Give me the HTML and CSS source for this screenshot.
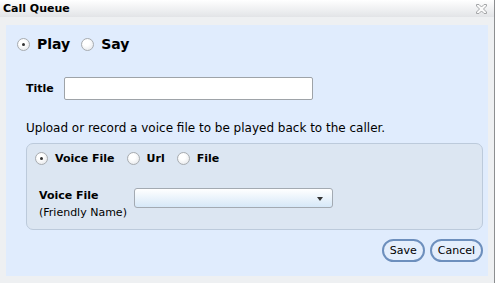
FILE: index.html
```html
<!DOCTYPE html>
<html lang="en">
<head>
    <meta charset="UTF-8">
    <title>Call Queue</title>
    <link rel="stylesheet" href="styles.css">
</head>
<body>
    <div class="dialog">
        <div class="titlebar">
            <span class="title">Call Queue</span>
            <svg class="close" width="13" height="12" viewBox="0 0 13 12">
                <path d="M1.5 1.5 L4 1.5 L6.5 4 L9 1.5 L11.5 1.5 L11.5 3 L8.5 6 L11.5 9 L11.5 10.5 L9 10.5 L6.5 8 L4 10.5 L1.5 10.5 L1.5 9 L4.5 6 L1.5 3 Z" fill="#fafafa" stroke="#a4a6a8" stroke-width="1"/>
            </svg>
        </div>
        <div class="content">
            <div class="panel">
                <div class="mode-row">
                    <label class="choice big"><span class="radio checked"></span>Play</label>
                    <label class="choice big"><span class="radio"></span>Say</label>
                </div>

                <div class="title-row">
                    <span class="label">Title</span>
                    <input class="text-input" type="text">
                </div>

                <p class="hint">Upload or record a voice file to be played back to the caller.</p>

                <div class="box">
                    <div class="source-row">
                        <label class="choice"><span class="radio checked"></span>Voice File</label>
                        <label class="choice"><span class="radio"></span>Url</label>
                        <label class="choice"><span class="radio"></span>File</label>
                    </div>
                    <div class="voice-row">
                        <div class="voice-label">
                            <span class="label">Voice File</span>
                            <span class="sub">(Friendly Name)</span>
                        </div>
                        <div class="select"><span class="arrow"></span></div>
                    </div>
                </div>

                <div class="actions">
                    <button class="btn">Save</button>
                    <button class="btn">Cancel</button>
                </div>
            </div>
        </div>
    </div>
</body>
</html>
```

FILE: styles.css
```css
body {
    margin: 0;
    padding: 0;
    background-color: #ffffff;
    font-family: 'DejaVu Sans', Verdana, sans-serif;
    font-size: 11px;
    color: #000;
}

.dialog {
    width: 494px;
    height: 283px;
    border-right: 1px solid #8c8e90;
    background-color: #e9ebed;
}

.titlebar {
    height: 17px;
    display: flex;
    align-items: center;
    justify-content: space-between;
    padding: 0 6px 0 3px;
    background: linear-gradient(#ffffff, #e2e4e7);
}

.title {
    font-weight: bold;
    font-size: 11px;
}

.close {
    display: block;
}

.content {
    padding: 8px 6px 7px 6px;
    background-color: #eef0f2;
}

.panel {
    height: 251px;
    background-color: #e0ecfd;
    padding: 0 5px 0 11px;
    box-sizing: border-box;
}

.mode-row {
    display: flex;
    gap: 11px;
    padding-top: 11px;
    height: 16px;
}

.choice {
    display: flex;
    align-items: center;
    font-weight: bold;
    font-size: 11px;
}

.choice.big {
    font-size: 14px;
}

.radio {
    width: 11px;
    height: 11px;
    border: 1px solid #a8acb0;
    border-radius: 50%;
    background: radial-gradient(circle at 40% 35%, #ffffff 30%, #dfe2e6 100%);
    margin-right: 7px;
    position: relative;
}

.radio.checked::after {
    content: "";
    position: absolute;
    left: 4px;
    top: 4px;
    width: 3px;
    height: 3px;
    border-radius: 50%;
    background-color: #333;
}

.title-row {
    display: flex;
    align-items: center;
    margin-top: 25px;
    padding-left: 9px;
}

.label {
    font-weight: bold;
    font-size: 11px;
}

.title-row .label {
    width: 38px;
}

.text-input {
    width: 249px;
    height: 23px;
    box-sizing: border-box;
    border: 1px solid #9ea3a8;
    border-radius: 2px;
    background-color: #fff;
    margin: 0;
}

.hint {
    margin: 21px 0 0 9px;
    font-size: 12px;
    line-height: 14px;
}

.box {
    margin: 8px 0 0 9px;
    width: 457px;
    height: 87px;
    box-sizing: border-box;
    background-color: #dce6f2;
    border: 1px solid #bccadb;
    border-radius: 7px;
    padding: 0 0 0 8px;
}

.source-row {
    display: flex;
    gap: 12px;
    padding-top: 8px;
}

.voice-row {
    display: flex;
    margin-top: 23px;
    padding-left: 4px;
}

.voice-label {
    display: flex;
    flex-direction: column;
    width: 95px;
    line-height: 17px;
    margin-top: -1px;
}

.sub {
    font-size: 11px;
}

.select {
    width: 199px;
    height: 20px;
    box-sizing: border-box;
    border: 1px solid #a3aab2;
    border-radius: 3px;
    background: linear-gradient(#ffffff, #d6e8f8);
    position: relative;
}

.arrow {
    position: absolute;
    right: 9px;
    top: 8px;
    border-left: 3px solid transparent;
    border-right: 3px solid transparent;
    border-top: 4px solid #333;
}

.actions {
    display: flex;
    justify-content: flex-end;
    gap: 5px;
    margin-top: 9px;
}

.btn {
    height: 23px;
    padding: 0 6px;
    font-family: 'DejaVu Sans', Verdana, sans-serif;
    font-size: 11px;
    color: #000;
    background-color: #e4eefc;
    border: 2px solid #6d8fbd;
    border-radius: 12px;
}
```
